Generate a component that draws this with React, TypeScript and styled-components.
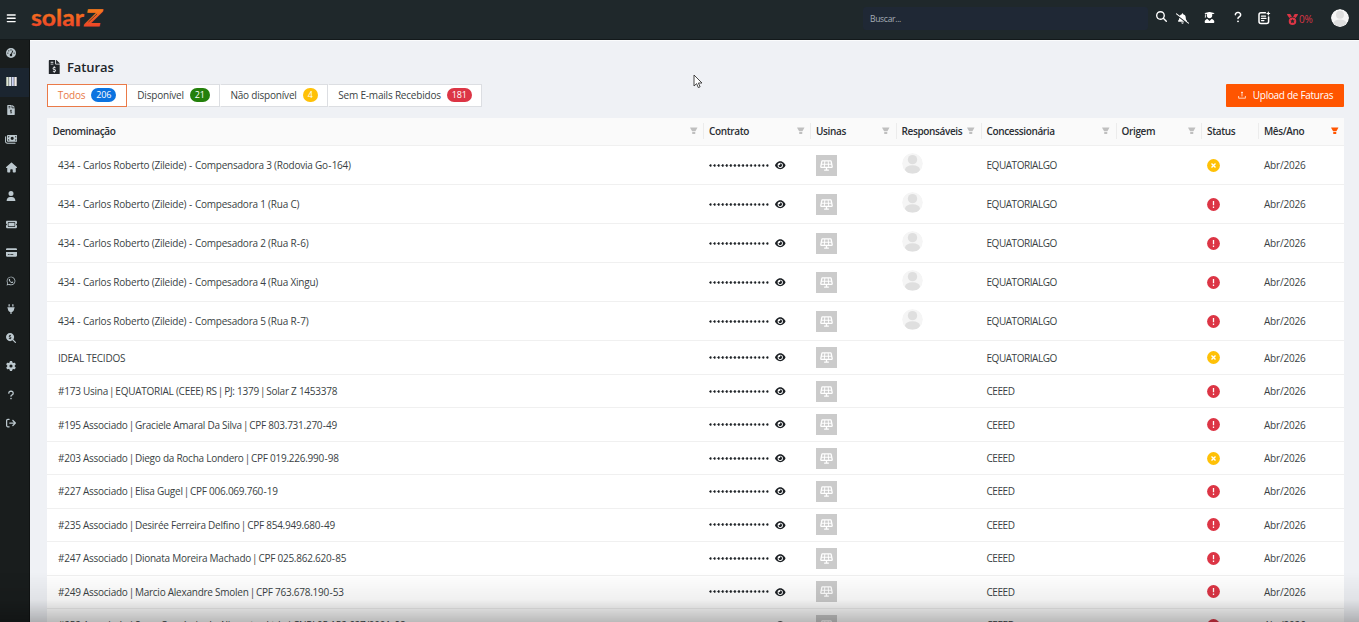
import React from 'react';
import styled, { createGlobalStyle } from 'styled-components';
import {
  FaBars, FaMoneyBills, FaHouse, FaUser, FaTicket, FaCreditCard,
  FaWhatsapp, FaPlug, FaMagnifyingGlassDollar, FaGear, FaQuestion, FaArrowRightFromBracket,
  FaGaugeHigh, FaMagnifyingGlass, FaBellSlash, FaMedal, FaEye, FaSolarPanel,
} from 'react-icons/fa6';
import { FaFileInvoiceDollar, FaUserGraduate } from 'react-icons/fa';
import { AiFillFilter, AiOutlineUpload } from 'react-icons/ai';

const GlobalStyle = createGlobalStyle`
  * { box-sizing: border-box; }
  body {
    margin: 0;
    overflow: hidden;
    background: #eff1f5;
    font-family: "Open Sans", "Noto Sans", sans-serif;
    font-size: 10px;
    color: #3a3f44;
  }
`;

const Page = styled.div`
  display: flex;
  flex-direction: column;
  height: 622px;
  overflow: hidden;
`;

const TopBar = styled.header`
  flex: none;
  display: flex;
  align-items: center;
  height: 40px;
  background: #1f282b;
  border-bottom: 1px solid #13191b;
  color: #fff;
`;

const MenuButton = styled.span`
  display: flex;
  width: 31px;
  padding-left: 6px;
  margin-top: -3px;
  font-size: 10.5px;
`;

const Logo = styled.svg`
  display: block;
  width: 76px;
  height: 26px;
  margin-top: -3px;
`;

const Search = styled.div`
  display: flex;
  align-items: center;
  width: 285px;
  height: 23px;
  margin: -3px 0 0 756px;
  padding-left: 7px;
  border-radius: 3px;
  background: #1f2835;
  color: #a6adb5;
  font-size: 8.5px;
  letter-spacing: -0.3px;
`;

const Tools = styled.div`
  position: relative;
  flex: 1;
  height: 39px;
`;

const Tool = styled.span<{ $x: number; $y: number; $size: number; $color?: string }>`
  position: absolute;
  left: ${p => p.$x}px;
  top: ${p => p.$y}px;
  display: flex;
  align-items: center;
  gap: 1px;
  font-size: ${p => p.$size}px;
  color: ${p => p.$color ?? '#fff'};
`;

const Percent = styled.span`
  font-size: 10px;
  font-weight: 500;
  line-height: 12px;
  letter-spacing: -0.3px;
`;

const Body = styled.div`
  display: flex;
  flex: 1;
  min-height: 0;
`;

const Rail = styled.nav`
  flex: none;
  width: 30px;
  background: #191d1d;
  border-right: 1px solid #101313;
`;

const RailItem = styled.div<{ $active?: boolean; $size?: number }>`
  display: flex;
  align-items: center;
  justify-content: center;
  height: 28.45px;
  padding: 0 7px 1.5px 0;
  font-size: ${p => p.$size ?? 10}px;
  color: ${p => (p.$active ? '#e4e9ee' : '#bcc8ce')};
  background: ${p => (p.$active ? '#1b2530' : 'transparent')};
`;

const Content = styled.main`
  flex: 1;
  min-width: 0;
  padding: 17px 15px 0 17px;
  border-top: 1px solid #fafbfc;
`;

const Title = styled.h1`
  display: flex;
  align-items: center;
  gap: 5.5px;
  height: 18px;
  margin: 0 0 8px;
  font-size: 13px;
  font-weight: 600;
  color: #212529;
  letter-spacing: -0.1px;

  svg { font-size: 14.5px; }
`;

const Bar = styled.div`
  display: flex;
  justify-content: space-between;
  height: 23px;
  margin-bottom: 11px;
`;

const Tabs = styled.div`
  display: flex;
`;

const Tab = styled.button<{ $w: number; $active?: boolean }>`
  display: flex;
  align-items: center;
  justify-content: center;
  gap: 6px;
  width: ${p => p.$w}px;
  padding: 0 0 1px;
  font: inherit;
  white-space: nowrap;
  letter-spacing: -0.2px;
  background: #fff;
  color: ${p => (p.$active ? '#e87a48' : '#3a3f44')};
  border: 1px solid ${p => (p.$active ? '#ea7a48' : '#dcdee2')};
  border-left-color: ${p => (p.$active ? '#ea7a48' : '#fff')};
`;

const Count = styled.span<{ $color: string }>`
  height: 14px;
  padding: 0 5px;
  border-radius: 7px;
  background: ${p => p.$color};
  color: #fff;
  font-size: 9px;
  line-height: 14px;
`;

const Upload = styled.button`
  display: flex;
  align-items: center;
  justify-content: center;
  gap: 6px;
  width: 118px;
  padding: 0 0 1px;
  border: 0;
  border-radius: 1px;
  background: #ff5500;
  color: #fff;
  font: inherit;
  letter-spacing: -0.3px;
`;

const Table = styled.section`
  background: #fff;
`;

const columns = '656px 107px 85.5px 85px 135px 85.5px 57px 86px';

const HeadRow = styled.div`
  display: grid;
  grid-template-columns: ${columns};
  align-items: center;
  height: 28px;
  padding-bottom: 1px;
  background: #fafafa;
  border-bottom: 1px solid #f0f0f0;
`;

const Head = styled.div`
  display: flex;
  align-items: center;
  justify-content: space-between;
  height: 16px;
  padding: 0 5px 0 5.5px;
  font-weight: 600;
  color: #2a2e33;
  white-space: nowrap;
  letter-spacing: -0.36px;

  & + & { border-left: 1px solid #ececec; padding-left: 5px; }
`;

const Filter = styled(AiFillFilter)<{ $on: boolean }>`
  flex: none;
  font-size: 9.5px;
  color: ${p => (p.$on ? '#ff5500' : '#bfbfbf')};
`;

const Row = styled.div<{ $tall: boolean }>`
  display: grid;
  grid-template-columns: ${columns};
  align-items: center;
  height: ${p => (p.$tall ? 39.1 : 33.45)}px;
  border-bottom: 1px solid #f0f0f0;
`;

const Cell = styled.div<{ $spacing?: number }>`
  display: flex;
  align-items: center;
  padding-left: 6px;
  white-space: nowrap;
  letter-spacing: ${p => p.$spacing ?? 0}px;
`;

const Name = styled.div<{ $spacing: number }>`
  padding-left: 11px;
  white-space: nowrap;
  letter-spacing: ${p => p.$spacing}px;
`;

const Separator = styled.span<{ $trim: number }>`
  margin: 0 ${p => p.$trim}px;
`;

const Dots = styled.span`
  width: 60px;
  height: 3px;
  margin-right: 6px;
  background: radial-gradient(circle at 1.5px 1.5px, #1b1f23 0.9px, transparent 1.5px) 0 0 / 4.07px 3px repeat-x;
`;

const Eye = styled(FaEye)`
  font-size: 10.5px;
  color: #1d2125;
`;

const Plant = styled.span`
  display: flex;
  align-items: center;
  justify-content: center;
  width: 21px;
  height: 21px;
  background: #cbcbcb;
  color: #fff;
  font-size: 13px;
`;

const Face = styled.svg<{ $size: number }>`
  display: block;
  width: ${p => p.$size}px;
  height: ${p => p.$size}px;
  border-radius: 50%;
`;

const PersonCell = styled(Cell)`
  padding-bottom: 4px;
`;

const Shade = styled.div`
  position: fixed;
  left: 0;
  right: 0;
  bottom: 0;
  height: 50px;
  background: linear-gradient(to bottom, rgba(0, 0, 0, 0), rgba(0, 0, 0, 0.06) 55%, rgba(0, 0, 0, 0.27));
`;

const Pointer = styled.svg`
  position: fixed;
  left: 693px;
  top: 74px;
  width: 10px;
  height: 15px;
`;

const Avatar = ({ size, bg, fg }: { size: number; bg: string; fg: string }) => (
  <Face $size={size} viewBox="0 0 22 22">
    <circle cx="11" cy="11" r="11" fill={bg} />
    <circle cx="11" cy="7" r="4.9" fill={fg} />
    <ellipse cx="11" cy="17.2" rx="7.8" ry="4.4" fill={fg} />
  </Face>
);

const StatusIcon = ({ kind }: { kind: 'x' | '!' }) => (
  <svg width="13" height="13" viewBox="0 0 13 13">
    <circle cx="6.5" cy="6.5" r="6.4" fill={kind === 'x' ? '#ffc107' : '#dc3545'} />
    {kind === 'x' ? (
      <path d="M4.5 4.5l4 4M8.5 4.5l-4 4" stroke="#fff" strokeWidth="1.4" />
    ) : (
      <path d="M6.5 3v4.2M6.5 8.5v1.4" stroke="#fff" strokeWidth="1.3" />
    )}
  </svg>
);

const NoteIcon = () => (
  <svg width="13" height="14" viewBox="0 0 13 14" fill="none" stroke="#fff" strokeWidth="1.5" strokeLinecap="round">
    <path d="M7.4 1.8H3Q1 1.8 1 3.8v6.7q0 2 2 2h5.6q2 0 2-2V6" />
    <path d="M3.5 5.2h4M3.5 7.4h4.4M3.5 9.6h2.4" strokeWidth="1.3" />
    <path d="M10.3 1.2v2.6M9 2.5h2.6" strokeWidth="1.2" />
  </svg>
);

const BarsIcon = () => (
  <svg width="11" height="9" viewBox="0 0 11 9" fill="currentColor">
    <rect x="0.3" width="2.3" height="9" fill="#dfe6d2" />
    <rect x="3.1" width="2.3" height="9" />
    <rect x="5.9" width="1.9" height="9" fill="#cfd4f5" />
    <rect x="8.3" width="2.4" height="9" fill="#f3ece6" />
  </svg>
);

const railIcons: [React.ComponentType, number?][] = [
  [FaGaugeHigh], [BarsIcon], [FaFileInvoiceDollar], [FaMoneyBills, 12.5], [FaHouse, 11], [FaUser], [FaTicket, 11],
  [FaCreditCard, 11], [FaWhatsapp], [FaPlug], [FaMagnifyingGlassDollar], [FaGear], [FaQuestion], [FaArrowRightFromBracket],
];

const tabs = [
  { label: 'Todos', count: 206, color: '#0b73e0', w: 80 },
  { label: 'Disponível', count: 21, color: '#24800b', w: 93 },
  { label: 'Não disponível', count: 4, color: '#ffc107', w: 108 },
  { label: 'Sem E-mails Recebidos', count: 181, color: '#dc3545', w: 154 },
];

const heads: [string, boolean][] = [
  ['Denominação', true], ['Contrato', true], ['Usinas', true], ['Responsáveis', true],
  ['Concessionária', true], ['Origem', true], ['Status', false], ['Mês/Ano', true],
];

type Invoice = { name: string; tall?: boolean; company: string; status: 'x' | '!' };

const invoices: Invoice[] = [
  { name: '434 - Carlos Roberto (Zileide) - Compensadora 3 (Rodovia Go-164)', tall: true, company: 'EQUATORIALGO', status: 'x' },
  { name: '434 - Carlos Roberto (Zileide) - Compesadora 1 (Rua C)', tall: true, company: 'EQUATORIALGO', status: '!' },
  { name: '434 - Carlos Roberto (Zileide) - Compesadora 2 (Rua R-6)', tall: true, company: 'EQUATORIALGO', status: '!' },
  { name: '434 - Carlos Roberto (Zileide) - Compesadora 4 (Rua Xingu)', tall: true, company: 'EQUATORIALGO', status: '!' },
  { name: '434 - Carlos Roberto (Zileide) - Compesadora 5 (Rua R-7)', tall: true, company: 'EQUATORIALGO', status: '!' },
  { name: 'IDEAL TECIDOS', company: 'EQUATORIALGO', status: 'x' },
  { name: '#173 Usina | EQUATORIAL (CEEE) RS | PJ: 1379 | Solar Z 1453378', company: 'CEEED', status: '!' },
  { name: '#195 Associado | Graciele Amaral Da Silva | CPF 803.731.270-49', company: 'CEEED', status: '!' },
  { name: '#203 Associado | Diego da Rocha Londero | CPF 019.226.990-98', company: 'CEEED', status: 'x' },
  { name: '#227 Associado | Elisa Gugel | CPF 006.069.760-19', company: 'CEEED', status: '!' },
  { name: '#235 Associado | Desirée Ferreira Delfino | CPF 854.949.680-49', company: 'CEEED', status: '!' },
  { name: '#247 Associado | Dionata Moreira Machado | CPF 025.862.620-85', company: 'CEEED', status: '!' },
  { name: '#249 Associado | Marcio Alexandre Smolen | CPF 763.678.190-53', company: 'CEEED', status: '!' },
  { name: '#252 Associado | Serra Comércio de Alimentos Ltda | CNPJ 05.152.627/0001-98', company: 'CEEED', status: '!' },
];

// Pipes sit tight against their neighbours; spaced hyphens get a little more air.
const spaced = (name: string) =>
  name.split(/(\||-)/).map((part, i) => {
    if (part === '|') return <Separator key={i} $trim={-1.3}>|</Separator>;
    if (part === '-') return <Separator key={i} $trim={0.4}>-</Separator>;
    return part;
  });

export default function App() {
  return (
    <Page>
      <GlobalStyle />
      <TopBar>
        <MenuButton><FaBars /></MenuButton>
        <Logo viewBox="0 0 76 26">
          <defs>
            <linearGradient id="ember" gradientUnits="userSpaceOnUse" x1="0" y1="5" x2="0" y2="22">
              <stop offset="0" stopColor="#f47a1c" />
              <stop offset="1" stopColor="#ee4328" />
            </linearGradient>
          </defs>
          <g fill="url(#ember)" stroke="url(#ember)" fontFamily="Lato, sans-serif" fontWeight="700">
            <text x="0" y="21.2" fontSize="22" strokeWidth="0.3" textLength="53" lengthAdjust="spacingAndGlyphs">solar</text>
            <text x="57.3" y="21.2" fontSize="22.5" strokeWidth="1.1" textLength="16" lengthAdjust="spacingAndGlyphs" transform="skewX(-12)">Z</text>
          </g>
          <path d="M57.5 17l8.6-8" stroke="#1f282b" strokeWidth="0.6" />
        </Logo>
        <Search>Buscar...</Search>
        <Tools>
          <Tool $x={8} $y={11} $size={11}><FaMagnifyingGlass /></Tool>
          <Tool $x={28} $y={12} $size={13}><FaBellSlash /></Tool>
          <Tool $x={56} $y={11.5} $size={11}><FaUserGraduate /></Tool>
          <Tool $x={84} $y={11} $size={12}><FaQuestion /></Tool>
          <Tool $x={110} $y={11} $size={13}><NoteIcon /></Tool>
          <Tool $x={139} $y={13} $size={11} $color="#dc3545"><FaMedal /><Percent>0%</Percent></Tool>
          <Tool $x={183} $y={9} $size={12}><Avatar size={18} bg="#f6f6f6" fg="#dfdfdf" /></Tool>
        </Tools>
      </TopBar>
      <Body>
        <Rail>
          {railIcons.map(([Icon, size], i) => <RailItem key={i} $active={i === 1} $size={size}><Icon /></RailItem>)}
        </Rail>
        <Content>
          <Title><FaFileInvoiceDollar />Faturas</Title>
          <Bar>
            <Tabs>
              {tabs.map((t, i) => (
                <Tab key={t.label} $w={t.w} $active={i === 0}>
                  {t.label}<Count $color={t.color}>{t.count}</Count>
                </Tab>
              ))}
            </Tabs>
            <Upload><AiOutlineUpload />Upload de Faturas</Upload>
          </Bar>
          <Table>
            <HeadRow>
              {heads.map(([label, filter]) => (
                <Head key={label}>{label}{filter && <Filter $on={label === 'Mês/Ano'} />}</Head>
              ))}
            </HeadRow>
            {invoices.map(v => (
              <Row key={v.name} $tall={!!v.tall}>
                <Name $spacing={v.tall ? -0.22 : -0.25}>{spaced(v.name)}</Name>
                <Cell><Dots /><Eye /></Cell>
                <Cell><Plant><FaSolarPanel /></Plant></Cell>
                <PersonCell>{v.tall && <Avatar size={21} bg="#f5f5f5" fg="#dfdfdf" />}</PersonCell>
                <Cell $spacing={-0.46}>{v.company}</Cell>
                <Cell />
                <Cell><StatusIcon kind={v.status} /></Cell>
                <Cell $spacing={-0.2}>Abr/2026</Cell>
              </Row>
            ))}
          </Table>
        </Content>
      </Body>
      <Shade />
      <Pointer viewBox="0 0 10 15">
        <path d="M1 1v11l2.6-2.4 1.7 4 1.8-.8-1.7-3.8H9z" fill="#fff" stroke="#333" strokeWidth="0.9" />
      </Pointer>
    </Page>
  );
}
